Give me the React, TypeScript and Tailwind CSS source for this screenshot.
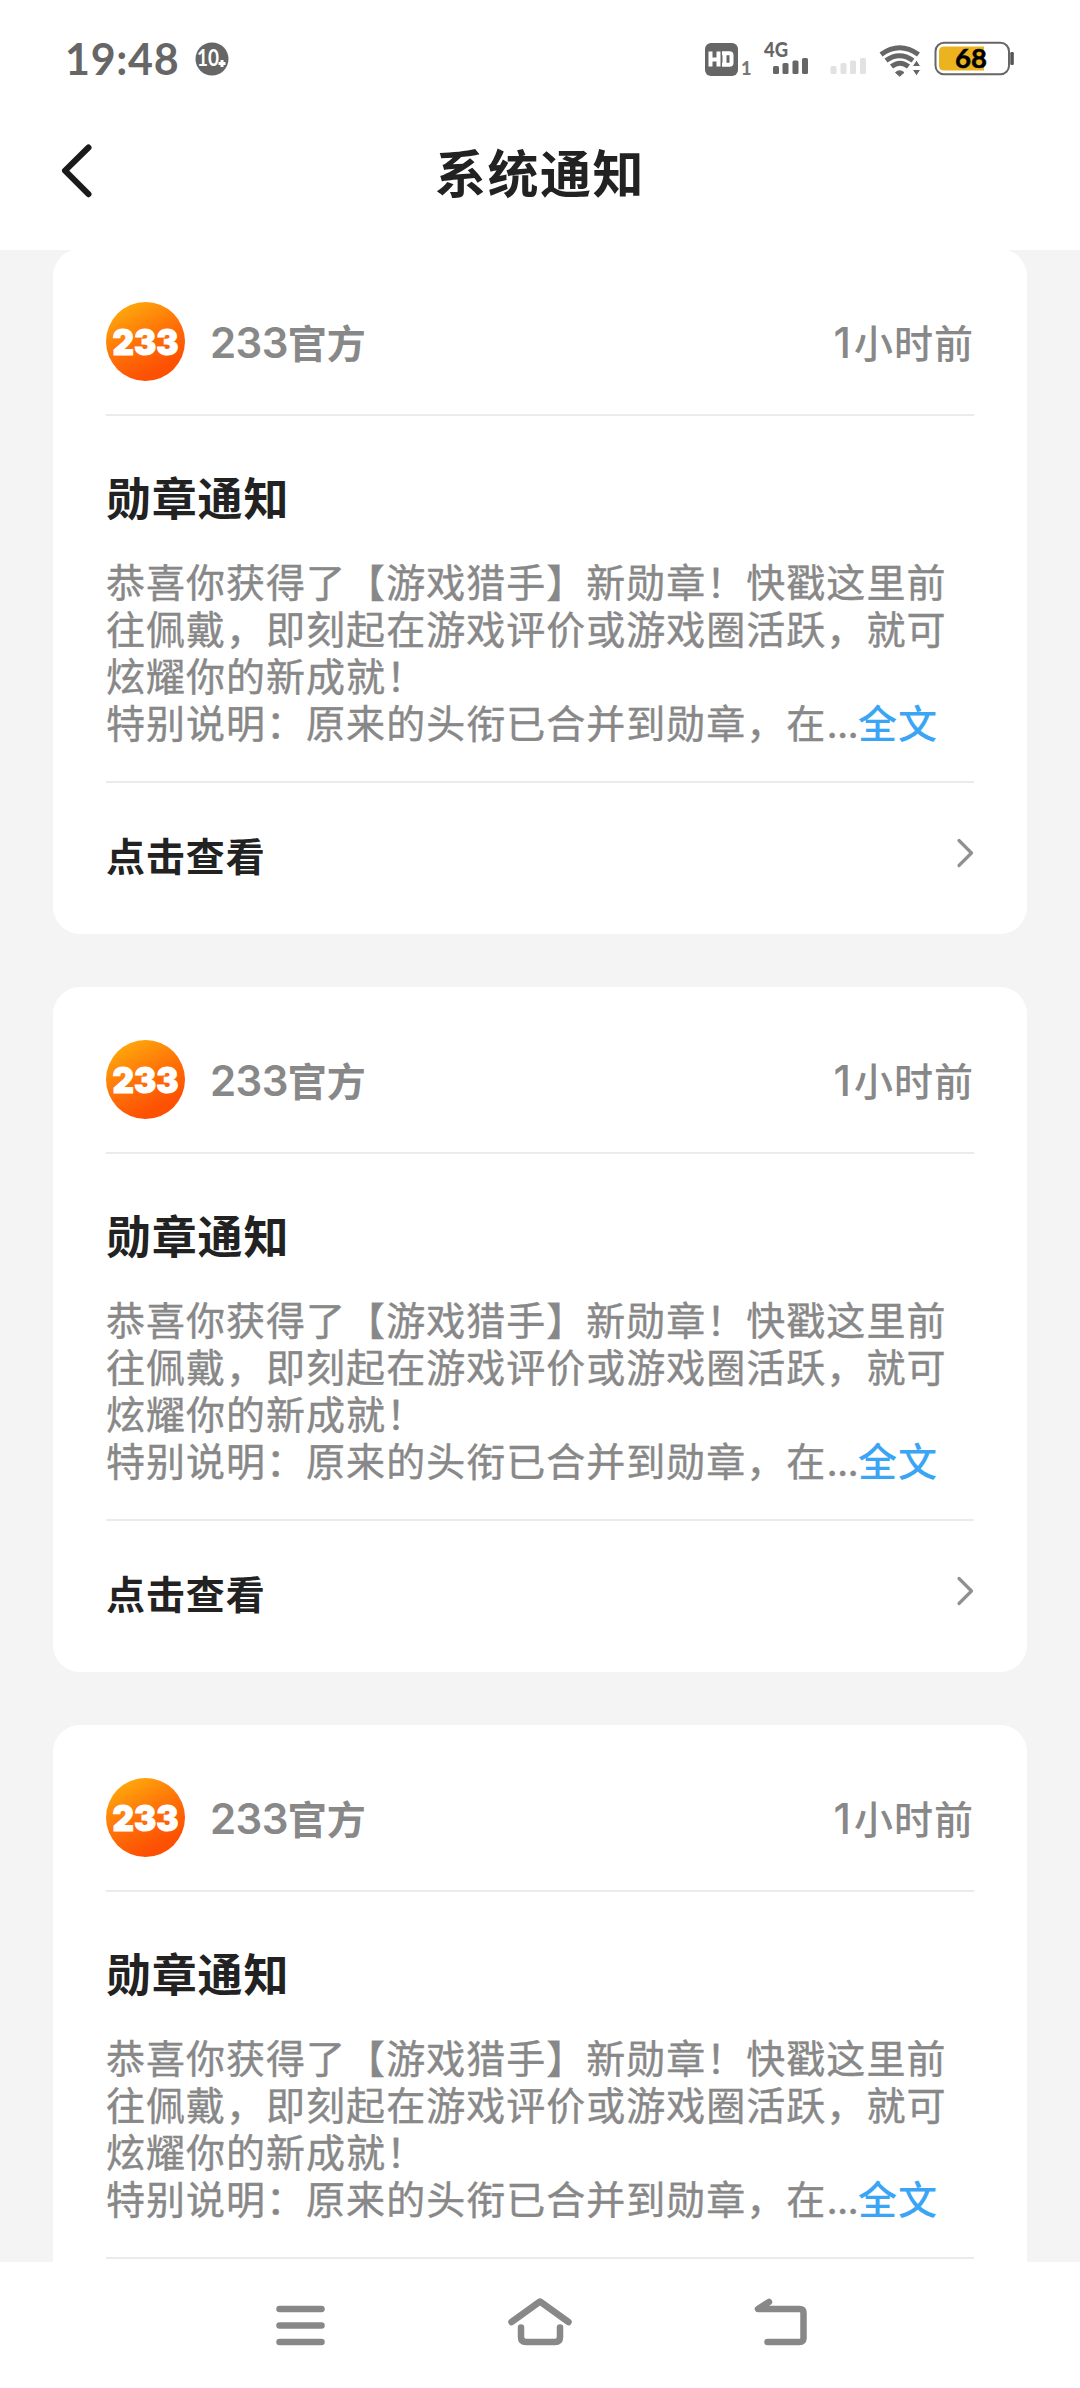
import React from "react";

function StatusBar() {
  return (
    <div className="flex h-[110px] items-start pt-[20px] pl-[65px] pr-[65px] text-[#666]">
      <div className="flex h-[78px] items-center">
        <span className="w-[114px] whitespace-nowrap font-['Lato'] text-[43px] font-bold leading-[78px] tracking-[0.7px]">19:48</span>
        <svg className="ml-[16px]" width="34" height="34" viewBox="0 0 34 34">
          <circle cx="17" cy="17" r="16.5" fill="#666" />
          <text x="2" y="24" fontFamily="Lato" fontWeight="700" fontSize="22" fill="#fff" textLength="22" lengthAdjust="spacingAndGlyphs">10</text>
          <path d="M27 18v7M23.500 21.500h7" stroke="#fff" strokeWidth="3" />
        </svg>
      </div>
      <svg className="ml-auto" width="312" height="80" viewBox="0 0 312 80">
        {/* HD voice */}
        <rect x="2" y="23" width="33" height="33" rx="6" fill="#666" />
        <g fill="none" stroke="#fff" strokeWidth="4">
          <path d="M7.500 31.500v15M15.500 31.500v15M7.500 39.500h8M21.500 33.300v11.400M19 33.300h7.500q2 0 2 2v7.400q0 2-2 2h-7.500" />
        </g>
        <text x="38" y="55" fontFamily="Lato" fontWeight="900" fontSize="18" fill="#777">1</text>
        {/* Mobile network */}
        <text x="61" y="37" fontFamily="Lato" fontWeight="900" fontSize="20" fill="#666" textLength="24" lengthAdjust="spacingAndGlyphs">4G</text>
        <g fill="#666">
          <rect x="70" y="46" width="6" height="8" rx="1.500" />
          <rect x="79.500" y="43" width="6" height="11" rx="1.500" />
          <rect x="89.500" y="40.500" width="6" height="13.500" rx="1.500" />
          <rect x="99" y="38" width="6" height="16" rx="1.500" />
        </g>
        <g fill="#e2e2e2">
          <rect x="127.500" y="46" width="6" height="8" rx="1.500" />
          <rect x="137.500" y="43" width="6" height="11" rx="1.500" />
          <rect x="147" y="40.500" width="6" height="13.500" rx="1.500" />
          <rect x="157" y="38" width="6" height="16" rx="1.500" />
        </g>
        {/* Wi-Fi */}
        <g fill="none" stroke="#666" strokeWidth="5">
          <path d="M178 34.500q18.500-13.500 37.500 0" />
          <path d="M183 40.500q13.500-9.500 27 0" />
          <path d="M188.500 46.500q8.500-6.500 17 0" />
        </g>
        <path d="M192.500 52.500q4-3.500 8.500 0l-4.300 3.800z" fill="#666" stroke="#666" strokeLinejoin="round" />
        <path d="M213.500 40l4.300 6.500h-8.600zM213.500 56l-4.300-6.500h8.600z" fill="#666" stroke="#fff" strokeWidth="1" />
        {/* Battery */}
        <rect x="232.500" y="22.800" width="73.500" height="31.500" rx="8.500" fill="#fff" stroke="#666" strokeWidth="2" />
        <path d="M241 26.500H281v24H241q-5 0-5-5v-14q0-5 5-5z" fill="#ebb31e" />
        <rect x="307.300" y="32" width="3.500" height="13" rx="1.200" fill="#555" />
        <text x="252" y="48" fontFamily="Lato" fontWeight="700" fontSize="27" fill="#000" stroke="#000" strokeWidth="0.5" textLength="32" lengthAdjust="spacingAndGlyphs">68</text>
      </svg>
    </div>
  );
}

function Avatar() {
  return (
    <svg width="79" height="79" viewBox="0 0 79 79" className="shrink-0">
      <defs>
        <linearGradient id="brand" x1="0.15" y1="0.05" x2="0.6" y2="0.9">
          <stop offset="0" stopColor="#ffab0c" />
          <stop offset="0.55" stopColor="#ff7208" />
          <stop offset="1" stopColor="#fd5003" />
        </linearGradient>
      </defs>
      <circle cx="39.500" cy="39.500" r="39.500" fill="url(#brand)" />
      <text x="6.500" y="52.500" fontFamily="Inter" fontWeight="900" fontSize="35" fill="#fff" stroke="#fff" strokeWidth="1" textLength="66" lengthAdjust="spacingAndGlyphs">233</text>
    </svg>
  );
}

function NoticeCard() {
  return (
    <article className="h-[685px] shrink-0 rounded-[27px] bg-white px-[53px] pt-[53px] text-[#888]">
      <header className="flex h-[114px] items-start border-b-2 border-[#ebebeb]">
        <Avatar />
        <div className="ml-[25px] flex h-[81px] flex-1 items-center justify-between">
          <span className="text-[39px] font-semibold leading-none"><span className="font-['Inter'] text-[42px] tracking-[-0.6px]">233</span>官方</span>
          <span className="text-[39px] font-medium leading-none tracking-[1px]"><span className="font-['Inter'] text-[42px] tracking-[3px]">1</span>小时前</span>
        </div>
      </header>
      <h2 className="mt-[48px] text-[45px] font-bold leading-[66px] tracking-[0.8px] text-[#222]">勋章通知</h2>
      <p className="mt-[27px] h-[188px] whitespace-nowrap text-[39px] leading-[47px] tracking-[1.02px] [-webkit-text-stroke:0.4px_#888]">
        恭喜你获得了【游戏猎手】新勋章！快戳这里前<br />
        往佩戴，即刻起在游戏评价或游戏圈活跃，就可<br />
        炫耀你的新成就！<br />
        特别说明：原来的头衔已合并到勋章，在<span className="font-['Inter'] leading-none tracking-[-0.7px]">...</span><span className="font-medium text-[#3ba5f5] [-webkit-text-stroke:0]">全文</span>
      </p>
      <footer className="mt-[36px] flex h-[145px] items-center justify-between border-t-2 border-[#ebebeb]">
        <span className="text-[39px] font-bold leading-none tracking-[0.9px] text-[#222]">点击查看</span>
        <svg width="18" height="30" viewBox="0 0 18 30" className="-mt-[3px]">
          <path d="M3 2.500l12.500 12.500L3 27.500" fill="none" stroke="#909090" strokeWidth="3.200" strokeLinecap="round" strokeLinejoin="round" />
        </svg>
      </footer>
    </article>
  );
}

function NavBar() {
  return (
    <nav className="flex h-[126px] shrink-0 items-start justify-between bg-white px-[269px] pt-[30px]">
      {[
        <path key="menu" d="M10.500 17h42M10.500 33.500h42M10.500 50h42" />,
        <path key="home" d="M3.500 30L32 9.500 60.500 30M13 35.500V45q0 5 5 5h29q5 0 5-5v-9.500" />,
        <path key="back" d="M22 10L11 17H52.500q4 0 4 4v25q0 4-4 4H20.500" />,
      ].map((shape, i) => (
        <svg key={i} width="64" height="64" viewBox="0 0 64 64" className="overflow-visible" fill="none" stroke="#888" strokeWidth="6.500" strokeLinecap="round" strokeLinejoin="round">
          {shape}
        </svg>
      ))}
    </nav>
  );
}

export default function App() {
  return (
    <div className="flex h-[2388px] w-[1080px] flex-col overflow-hidden bg-[#f4f4f4] font-['Noto_Sans_CJK_SC',sans-serif]">
      <div className="h-[250px] shrink-0 bg-white">
        <StatusBar />
        <div className="grid h-[130px] grid-cols-[1fr_auto_1fr] items-start px-[60px]">
          <svg width="34" height="56" viewBox="0 0 34 56" className="mt-[33px]">
            <path d="M28.500 4.500L5 27.700l23.500 23.500" fill="none" stroke="#1a1a1a" strokeWidth="6" strokeLinecap="round" strokeLinejoin="round" />
          </svg>
          <h1 className="mt-[23px] text-[51px] font-bold leading-[76px] tracking-[1.500px] text-[#222]">系统通知</h1>
        </div>
      </div>
      <main className="flex min-h-0 flex-1 flex-col overflow-hidden px-[53px]">
        <div className="-mt-px flex flex-col gap-[53px]">
          <NoticeCard />
          <NoticeCard />
          <NoticeCard />
        </div>
      </main>
      <NavBar />
    </div>
  );
}
